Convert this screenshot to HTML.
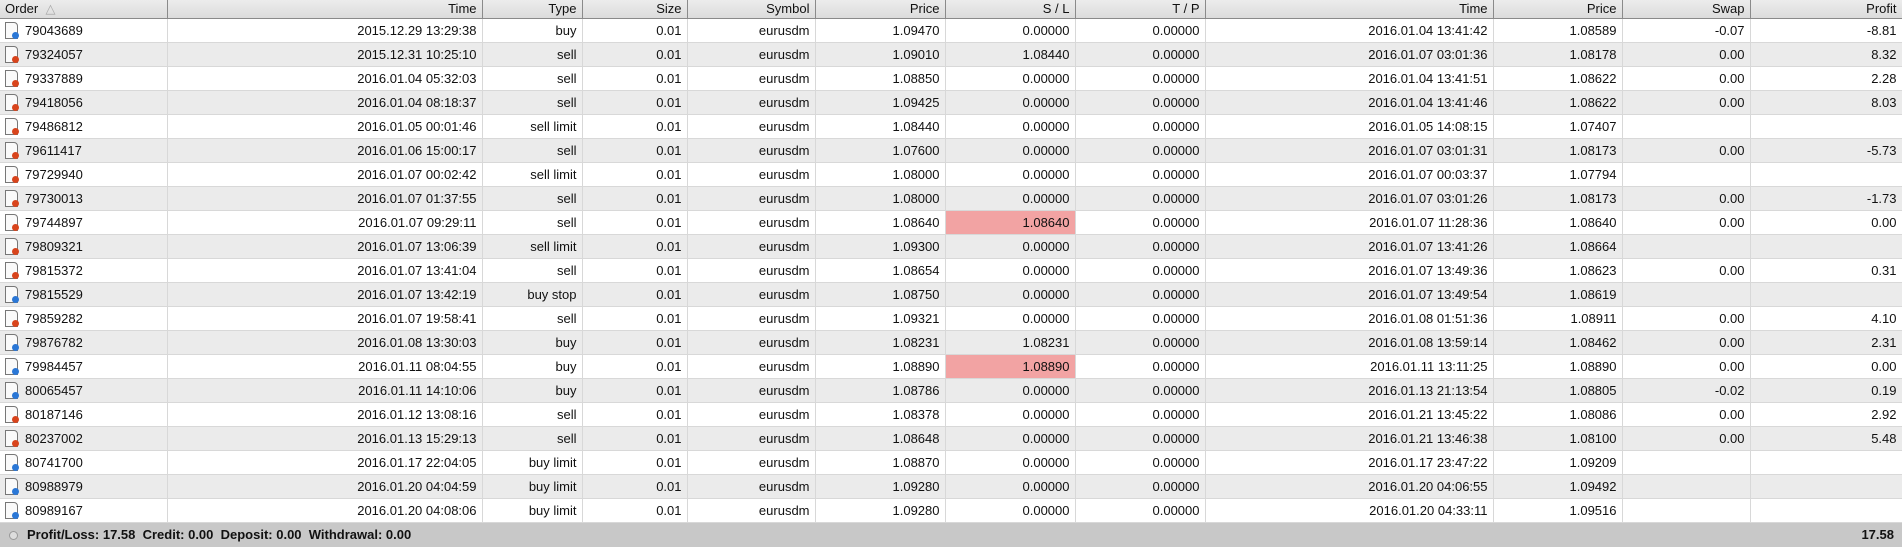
<!DOCTYPE html>
<html><head><meta charset="utf-8"><style>
body{margin:0;width:1902px;height:560px;background:#fff;overflow:hidden;font-family:"Liberation Sans",Tahoma,sans-serif;font-size:13px;color:#111}
table{border-collapse:collapse;table-layout:fixed;width:1902px}
th{height:18px;padding:0 5px 0 3px;font-weight:normal;text-align:right;background:linear-gradient(#ececec,#dcdcdc);border-right:1px solid #8a8a8a;border-bottom:1px solid #8a8a8a;font-size:13px;line-height:18px}
th:first-child{text-align:left;padding-left:5px}
td{height:23px;padding:0 5px 0 3px;text-align:right;border-right:1px solid #d8d8d8;border-bottom:1px solid #d8d8d8;white-space:nowrap;line-height:23px}
tr:nth-child(odd) td{background:#ebebeb}
td:first-child{text-align:left;padding-left:4px}
td.pk{background:#f2a3a3 !important}
.ic{display:inline-block;position:relative;width:15px;height:17px;vertical-align:-4px;margin-right:6px}
.ic:before{content:"";position:absolute;left:1px;top:0;width:11px;height:15px;border:1px solid #777;background:#fafafa;border-radius:0 4px 0 0}
.ic:after{content:"";position:absolute;left:8px;top:10px;width:7px;height:7px;border-radius:50%;background:#2a77d6}
.ic.s:after{background:#d8441c}
.sum{position:absolute;left:0;top:523px;width:1902px;height:24px;background:#c8c8c8;font-weight:bold;line-height:24px}
.sum .l{position:absolute;left:27px}
.sum .r{position:absolute;right:8px}
.sum .o{position:absolute;left:9px;top:8px;width:7px;height:7px;border-radius:50%;border:1px solid #999;background:#ddd}
</style></head><body>
<table>
<colgroup><col style="width:167px"><col style="width:315px"><col style="width:100px"><col style="width:105px"><col style="width:128px"><col style="width:130px"><col style="width:130px"><col style="width:130px"><col style="width:288px"><col style="width:129px"><col style="width:128px"><col style="width:152px"></colgroup>
<tr><th>Order &nbsp;<span style="color:#aaa">△</span></th><th>Time</th><th>Type</th><th>Size</th><th>Symbol</th><th>Price</th><th>S / L</th><th>T / P</th><th>Time</th><th>Price</th><th>Swap</th><th>Profit</th></tr>
<tr><td><span class="ic"></span>79043689</td><td>2015.12.29 13:29:38</td><td>buy</td><td>0.01</td><td>eurusdm</td><td>1.09470</td><td>0.00000</td><td>0.00000</td><td>2016.01.04 13:41:42</td><td>1.08589</td><td>-0.07</td><td>-8.81</td></tr>
<tr><td><span class="ic s"></span>79324057</td><td>2015.12.31 10:25:10</td><td>sell</td><td>0.01</td><td>eurusdm</td><td>1.09010</td><td>1.08440</td><td>0.00000</td><td>2016.01.07 03:01:36</td><td>1.08178</td><td>0.00</td><td>8.32</td></tr>
<tr><td><span class="ic s"></span>79337889</td><td>2016.01.04 05:32:03</td><td>sell</td><td>0.01</td><td>eurusdm</td><td>1.08850</td><td>0.00000</td><td>0.00000</td><td>2016.01.04 13:41:51</td><td>1.08622</td><td>0.00</td><td>2.28</td></tr>
<tr><td><span class="ic s"></span>79418056</td><td>2016.01.04 08:18:37</td><td>sell</td><td>0.01</td><td>eurusdm</td><td>1.09425</td><td>0.00000</td><td>0.00000</td><td>2016.01.04 13:41:46</td><td>1.08622</td><td>0.00</td><td>8.03</td></tr>
<tr><td><span class="ic s"></span>79486812</td><td>2016.01.05 00:01:46</td><td>sell limit</td><td>0.01</td><td>eurusdm</td><td>1.08440</td><td>0.00000</td><td>0.00000</td><td>2016.01.05 14:08:15</td><td>1.07407</td><td></td><td></td></tr>
<tr><td><span class="ic s"></span>79611417</td><td>2016.01.06 15:00:17</td><td>sell</td><td>0.01</td><td>eurusdm</td><td>1.07600</td><td>0.00000</td><td>0.00000</td><td>2016.01.07 03:01:31</td><td>1.08173</td><td>0.00</td><td>-5.73</td></tr>
<tr><td><span class="ic s"></span>79729940</td><td>2016.01.07 00:02:42</td><td>sell limit</td><td>0.01</td><td>eurusdm</td><td>1.08000</td><td>0.00000</td><td>0.00000</td><td>2016.01.07 00:03:37</td><td>1.07794</td><td></td><td></td></tr>
<tr><td><span class="ic s"></span>79730013</td><td>2016.01.07 01:37:55</td><td>sell</td><td>0.01</td><td>eurusdm</td><td>1.08000</td><td>0.00000</td><td>0.00000</td><td>2016.01.07 03:01:26</td><td>1.08173</td><td>0.00</td><td>-1.73</td></tr>
<tr><td><span class="ic s"></span>79744897</td><td>2016.01.07 09:29:11</td><td>sell</td><td>0.01</td><td>eurusdm</td><td>1.08640</td><td class="pk">1.08640</td><td>0.00000</td><td>2016.01.07 11:28:36</td><td>1.08640</td><td>0.00</td><td>0.00</td></tr>
<tr><td><span class="ic s"></span>79809321</td><td>2016.01.07 13:06:39</td><td>sell limit</td><td>0.01</td><td>eurusdm</td><td>1.09300</td><td>0.00000</td><td>0.00000</td><td>2016.01.07 13:41:26</td><td>1.08664</td><td></td><td></td></tr>
<tr><td><span class="ic s"></span>79815372</td><td>2016.01.07 13:41:04</td><td>sell</td><td>0.01</td><td>eurusdm</td><td>1.08654</td><td>0.00000</td><td>0.00000</td><td>2016.01.07 13:49:36</td><td>1.08623</td><td>0.00</td><td>0.31</td></tr>
<tr><td><span class="ic"></span>79815529</td><td>2016.01.07 13:42:19</td><td>buy stop</td><td>0.01</td><td>eurusdm</td><td>1.08750</td><td>0.00000</td><td>0.00000</td><td>2016.01.07 13:49:54</td><td>1.08619</td><td></td><td></td></tr>
<tr><td><span class="ic s"></span>79859282</td><td>2016.01.07 19:58:41</td><td>sell</td><td>0.01</td><td>eurusdm</td><td>1.09321</td><td>0.00000</td><td>0.00000</td><td>2016.01.08 01:51:36</td><td>1.08911</td><td>0.00</td><td>4.10</td></tr>
<tr><td><span class="ic"></span>79876782</td><td>2016.01.08 13:30:03</td><td>buy</td><td>0.01</td><td>eurusdm</td><td>1.08231</td><td>1.08231</td><td>0.00000</td><td>2016.01.08 13:59:14</td><td>1.08462</td><td>0.00</td><td>2.31</td></tr>
<tr><td><span class="ic"></span>79984457</td><td>2016.01.11 08:04:55</td><td>buy</td><td>0.01</td><td>eurusdm</td><td>1.08890</td><td class="pk">1.08890</td><td>0.00000</td><td>2016.01.11 13:11:25</td><td>1.08890</td><td>0.00</td><td>0.00</td></tr>
<tr><td><span class="ic"></span>80065457</td><td>2016.01.11 14:10:06</td><td>buy</td><td>0.01</td><td>eurusdm</td><td>1.08786</td><td>0.00000</td><td>0.00000</td><td>2016.01.13 21:13:54</td><td>1.08805</td><td>-0.02</td><td>0.19</td></tr>
<tr><td><span class="ic s"></span>80187146</td><td>2016.01.12 13:08:16</td><td>sell</td><td>0.01</td><td>eurusdm</td><td>1.08378</td><td>0.00000</td><td>0.00000</td><td>2016.01.21 13:45:22</td><td>1.08086</td><td>0.00</td><td>2.92</td></tr>
<tr><td><span class="ic s"></span>80237002</td><td>2016.01.13 15:29:13</td><td>sell</td><td>0.01</td><td>eurusdm</td><td>1.08648</td><td>0.00000</td><td>0.00000</td><td>2016.01.21 13:46:38</td><td>1.08100</td><td>0.00</td><td>5.48</td></tr>
<tr><td><span class="ic"></span>80741700</td><td>2016.01.17 22:04:05</td><td>buy limit</td><td>0.01</td><td>eurusdm</td><td>1.08870</td><td>0.00000</td><td>0.00000</td><td>2016.01.17 23:47:22</td><td>1.09209</td><td></td><td></td></tr>
<tr><td><span class="ic"></span>80988979</td><td>2016.01.20 04:04:59</td><td>buy limit</td><td>0.01</td><td>eurusdm</td><td>1.09280</td><td>0.00000</td><td>0.00000</td><td>2016.01.20 04:06:55</td><td>1.09492</td><td></td><td></td></tr>
<tr><td><span class="ic"></span>80989167</td><td>2016.01.20 04:08:06</td><td>buy limit</td><td>0.01</td><td>eurusdm</td><td>1.09280</td><td>0.00000</td><td>0.00000</td><td>2016.01.20 04:33:11</td><td>1.09516</td><td></td><td></td></tr>
</table>
<div class="sum"><span class="o"></span><span class="l">Profit/Loss: 17.58&nbsp; Credit: 0.00&nbsp; Deposit: 0.00&nbsp; Withdrawal: 0.00</span><span class="r">17.58</span></div>
</body></html>
